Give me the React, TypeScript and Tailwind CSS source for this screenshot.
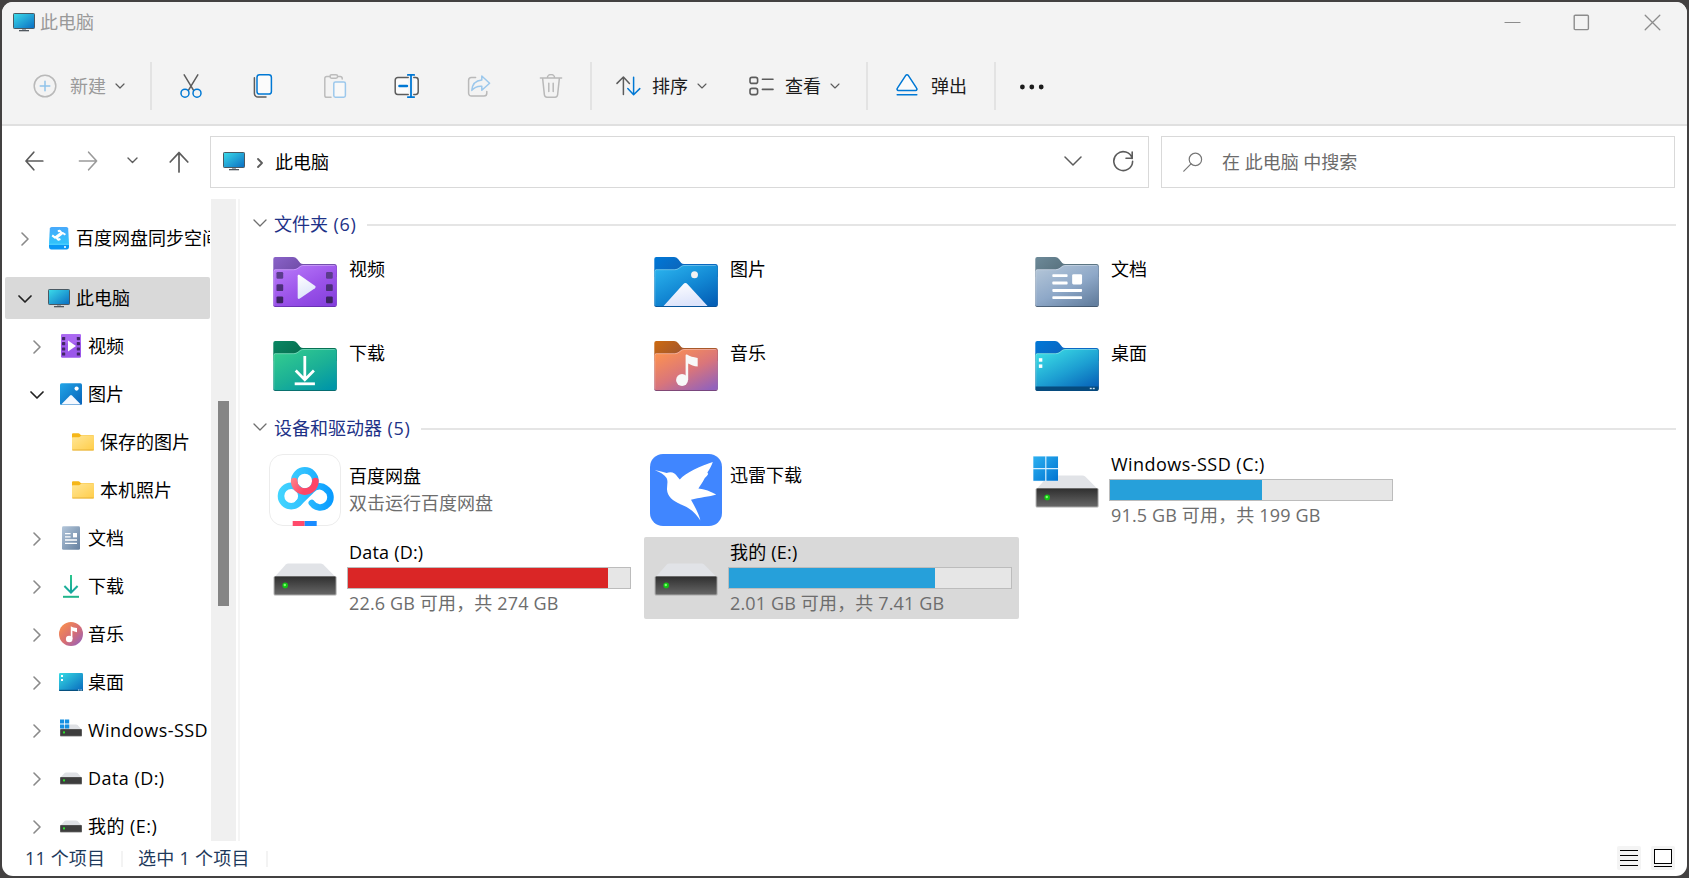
import { ReactNode } from "react";

const INK = "#5c5c5c";
const BLUE = "#0078d4";

/* ---------- small glyphs ---------- */

function Chevron({ dir = "down", w = 10, color = INK, sw = 1.4 }: { dir?: "down" | "right"; w?: number; color?: string; sw?: number }) {
  const h = w / 2;
  const down = dir === "down";
  return (
    <svg
      width={down ? w + 2 : h + 4}
      height={down ? h + 4 : w + 2}
      viewBox={down ? `-1 -2 ${w + 2} ${h + 4}` : `-2 -1 ${h + 4} ${w + 2}`}
      fill="none"
      stroke={color}
      strokeWidth={sw}
      strokeLinecap="round"
      strokeLinejoin="round"
      className="shrink-0"
    >
      <path d={down ? `M0 0L${w / 2} ${h}L${w} 0` : `M0 0L${h} ${w / 2}L0 ${w}`} />
    </svg>
  );
}

function Stroke({ w, h, children, color = INK, sw = 1.5 }: { w: number; h: number; children: ReactNode; color?: string; sw?: number }) {
  return (
    <svg width={w} height={h} viewBox={`0 0 ${w} ${h}`} fill="none" stroke={color} strokeWidth={sw} strokeLinecap="round" strokeLinejoin="round" className="shrink-0">
      {children}
    </svg>
  );
}

function Monitor() {
  return (
    <svg width="22" height="19" viewBox="0 0 22 19" className="shrink-0">
      <defs>
        <linearGradient id="mon" x1="0" y1="0" x2="1" y2="1">
          <stop offset="0" stopColor="#3bdcea" />
          <stop offset="1" stopColor="#0a6cc2" />
        </linearGradient>
      </defs>
      <rect x="9" y="15" width="4" height="3" fill="#9aa3ab" />
      <rect x="6" y="17" width="10" height="1.3" fill="#50575e" />
      <rect x="0.5" y="0.5" width="21" height="15" rx="0.8" fill="url(#mon)" stroke="#4a5963" />
    </svg>
  );
}

/* ---------- toolbar glyphs ---------- */

const NewIcon = () => (
  <Stroke w={24} h={24} color="#b9b9b9">
    <circle cx="12" cy="12" r="10.8" />
    <path d="M12 7.2V16.8M7.2 12H16.8" stroke="#90c3ea" />
  </Stroke>
);
const CutIcon = () => (
  <Stroke w={24} h={24}>
    <path d="M5.2 0.8L14.6 16.4M18.8 0.8L9.4 16.4" />
    <circle cx="6" cy="19.2" r="4" stroke={BLUE} />
    <circle cx="18" cy="19.2" r="4" stroke={BLUE} />
  </Stroke>
);
const CopyIcon = () => (
  <Stroke w={24} h={24}>
    <path d="M3.4 3.8V19.4A3.6 3.6 0 0 0 7 23H15" />
    <rect x="6" y="0.8" width="14.4" height="19.2" rx="2.6" stroke={BLUE} fill="#fbfbfb" />
  </Stroke>
);
const PasteIcon = () => (
  <Stroke w={24} h={24} color="#bcbcbc">
    <path d="M7 2.6H3.6A1.8 1.8 0 0 0 1.8 4.4V21.4A1.8 1.8 0 0 0 3.6 23.2H8M15 2.6H17.4A1.8 1.8 0 0 1 19.2 4.4V5" />
    <rect x="7" y="0.8" width="7.6" height="3.4" rx="1.6" />
    <rect x="10.8" y="8" width="11.6" height="15.2" rx="1.6" stroke="#9cc8ec" fill="#f8f8f8" />
  </Stroke>
);
const RenameIcon = () => (
  <Stroke w={26} h={24}>
    <path d="M14.2 3.6H3.8A2.6 2.6 0 0 0 1.2 6.2V17.8A2.6 2.6 0 0 0 3.8 20.4H14.2M19.8 3.6H21.6A2.6 2.6 0 0 1 24.2 6.2V17.8A2.6 2.6 0 0 1 21.6 20.4H19.8" fill="#fbfbfb" />
    <path d="M17 1V23M13.8 0.9H20.2M13.8 23.1H20.2" stroke={BLUE} strokeWidth="1.8" />
    <path d="M5.4 12H13" stroke={BLUE} strokeWidth="2.4" />
  </Stroke>
);
const ShareIcon = () => (
  <Stroke w={24} h={24} color="#b9b9b9">
    <path d="M8.6 3.6H4.4A2.8 2.8 0 0 0 1.6 6.4V19.2A2.8 2.8 0 0 0 4.4 22H17A2.8 2.8 0 0 0 19.8 19.2V17.6" />
    <path d="M14.8 2L22.6 9.2L14.8 16.2V12.2C10 11.8 7 13.6 4.8 16.4C5.2 10.4 8.6 6.6 14.8 6Z" stroke="#9cc8ec" />
  </Stroke>
);
const TrashIcon = () => (
  <Stroke w={24} h={24} color="#b9b9b9">
    <path d="M1.4 4H22.6M8.4 3.8A3.6 3.2 0 0 1 15.6 3.8M3.6 4.2L5.4 20.8A2.6 2.6 0 0 0 8 23.2H16A2.6 2.6 0 0 0 18.6 20.8L20.4 4.2M9.8 9.2V17.6M14.2 9.2V17.6" />
  </Stroke>
);
const SortIcon = () => (
  <Stroke w={25} h={20}>
    <path d="M7.4 18.6V1.2M1 7.4L7.4 1L13.4 7.4" />
    <path d="M17.6 1.2V18.6M11.8 12.6L17.6 18.8L23.8 12.6" stroke={BLUE} />
  </Stroke>
);
const ViewIcon = () => (
  <Stroke w={25} h={20} sw={1.6}>
    <rect x="1" y="1.4" width="7.6" height="6" rx="2" />
    <rect x="1" y="12.4" width="7.6" height="6.2" rx="2" />
    <path d="M13.4 3.2H24M13.4 13.4H24" />
  </Stroke>
);
const EjectIcon = () => (
  <Stroke w={22} h={22} color={BLUE}>
    <path d="M9.6 1.6L1.4 14.2A1.3 1.3 0 0 0 2.4 16.4H19.6A1.3 1.3 0 0 0 20.6 14.2L12.4 1.6A1.7 1.7 0 0 0 9.6 1.6Z" fill="#fbfbfb" />
    <path d="M1.2 20.8H20.8" />
  </Stroke>
);

/* ---------- folder tiles ---------- */

type Kind = "video" | "picture" | "doc" | "download" | "music" | "desktop";

const folderColors: Record<Kind, { tab: [string, string]; a: string; b: string; c: string; edge: string }> = {
  video: { tab: ["#8a63c9", "#7450ad"], a: "#b97bfa", b: "#9c54ea", c: "#8540dd", edge: "#5f2ca6" },
  picture: { tab: ["#0078d7", "#0a68bf"], a: "#2bb4ee", b: "#1287d3", c: "#045fb6", edge: "#064b8e" },
  doc: { tab: ["#6d8a99", "#5b7582"], a: "#b4c6d8", b: "#8ea8c8", c: "#647f9f", edge: "#3b4d61" },
  download: { tab: ["#0a8763", "#077253"], a: "#34cd8f", b: "#1bb096", c: "#0096a8", edge: "#075f5f" },
  music: { tab: ["#cd6a10", "#a8592a"], a: "#ff944d", b: "#d9757b", c: "#9362bb", edge: "#6c3b6c" },
  desktop: { tab: ["#0078d7", "#0a68c4"], a: "#3de0e6", b: "#1d9fd2", c: "#0762b8", edge: "#053a6d" },
};

function FolderArt({ kind }: { kind: Kind }) {
  switch (kind) {
    case "video":
      return (
        <g>
          {[15, 27.3, 39.4].map((y, i) => (
            <g key={y} fill={["#5b3d8c", "#4c2f7a", "#3c2462"][i]}>
              <rect x="3.2" y={y} width="6.8" height="6.8" rx="1.2" />
              <rect x="53.2" y={y} width="6.8" height="6.8" rx="1.2" />
            </g>
          ))}
          <path d="M24.6 19.2C24.6 17.8 25.6 17.4 26.8 18.2L42 28.8C43 29.5 43 30.5 42 31.2L26.8 41.6C25.6 42.4 24.6 42 24.6 40.6Z" fill="url(#wht)" />
        </g>
      );
    case "picture":
      return (
        <g>
          <circle cx="40.6" cy="17.8" r="3.5" fill="#f2f2f2" />
          <path d="M9.4 49L29.2 27.2Q31.4 24.6 33.6 27.2L53.8 49Z" fill="url(#wht)" />
        </g>
      );
    case "doc":
      return (
        <g fill="#fff">
          <rect x="17.2" y="17.2" width="15.4" height="2.9" rx="0.8" />
          <rect x="17.2" y="24.6" width="15.4" height="2.9" rx="0.8" />
          <rect x="17.2" y="32" width="30" height="2.9" rx="0.8" />
          <rect x="17.2" y="39.2" width="30" height="2.9" rx="0.8" />
          <rect x="37.2" y="17.2" width="10" height="10.3" rx="1.4" />
        </g>
      );
    case "download":
      return (
        <g stroke="#fff" strokeWidth="2.8" fill="none">
          <path d="M31.8 15V38.6M22.6 29.6L31.8 38.8L41 29.6" />
          <path d="M21.6 42.8H42" />
        </g>
      );
    case "music":
      return (
        <g fill="#f8f8f8">
          <circle cx="28" cy="39" r="6" />
          <path d="M31.6 14.4Q31.6 13 33 13.6C36 15.4 39 16.4 43.8 17V25.4C40 25.2 37 24 34.2 22.4V39H31.6Z" />
        </g>
      );
    case "desktop":
      return (
        <g>
          <path d="M0.4 45.6H63.6V48Q63.6 49.8 62 49.8H2Q0.4 49.8 0.4 48Z" fill="#064b7d" />
          <rect x="3.6" y="17.2" width="3.5" height="3.5" fill="#fff" />
          <rect x="3.6" y="23.4" width="3.5" height="3.5" fill="#fff" />
          <rect x="55" y="46.8" width="2" height="1.4" fill="#cfe3f2" />
          <rect x="58" y="46.8" width="2" height="1.4" fill="#cfe3f2" />
        </g>
      );
  }
}

function FolderIcon({ kind }: { kind: Kind }) {
  const c = folderColors[kind];
  return (
    <svg width="64" height="50" viewBox="-0.3 0 64.6 50" preserveAspectRatio="none" className="shrink-0">
      <defs>
        <linearGradient id={`t-${kind}`} x1="0" y1="0" x2="1" y2="0.4">
          <stop offset="0" stopColor={c.tab[0]} />
          <stop offset="0.5" stopColor={c.tab[1]} />
        </linearGradient>
        <linearGradient id={`b-${kind}`} x1="0.1" y1="0" x2="0.85" y2="1">
          <stop offset="0" stopColor={c.a} />
          <stop offset="0.55" stopColor={c.b} />
          <stop offset="1" stopColor={c.c} />
        </linearGradient>
        <linearGradient id="wht" x1="0" y1="0" x2="0.3" y2="1">
          <stop offset="0" stopColor="#fff" />
          <stop offset="1" stopColor="#dde4fb" />
        </linearGradient>
      </defs>
      <path d="M0 20V2Q0 0 2 0H20Q22.4 0 24 2L27.2 6Q28.2 7 30 7H61.8Q64 7 64 9.2V20Z" fill={`url(#t-${kind})`} />
      <path d="M0 14Q0 12.2 2 12.2H20.6Q23 12.2 24.8 10.8L27.4 8.8Q28.6 8 30.4 8H62Q64 8 64 10V48Q64 50 62 50H2Q0 50 0 48Z" fill={c.edge} />
      <path d="M0 14Q0 12.2 2 12.2H20.6Q23 12.2 24.8 10.8L27.4 8.8Q28.6 8 30.4 8H62Q64 8 64 10V47.2Q64 49.2 62 49.2H2Q0 49.2 0 47.2Z" fill={`url(#b-${kind})`} />
      <path d="M0.5 48V14.4Q0.5 12.7 2 12.7H20.8Q23.2 12.7 25 11.2L27.6 9.2Q28.8 8.5 30.4 8.5H62" fill="none" stroke="#fff" strokeOpacity="0.3" />
      <FolderArt kind={kind} />
    </svg>
  );
}

/* ---------- drives and apps ---------- */

function DriveIcon({ windows = false }: { windows?: boolean }) {
  return (
    <svg width="66" height="54" viewBox="0 0 66 54" className="shrink-0">
      <defs>
        <linearGradient id="drv" x1="0" y1="0" x2="0" y2="1">
          <stop offset="0" stopColor="#2f2f2f" />
          <stop offset="1" stopColor="#666" />
        </linearGradient>
        <linearGradient id="win" x1="0" y1="0" x2="1" y2="1">
          <stop offset="0" stopColor="#2cb0f0" />
          <stop offset="1" stopColor="#0073d1" />
        </linearGradient>
      </defs>
      <path d="M14.8 20.4Q15.8 19.4 17.4 19.4H49.4Q51 19.4 52.2 20.6L64.6 33H3.6Z" fill="#e1e3e7" />
      <rect x="2.6" y="32" width="63" height="19.6" rx="1.6" fill="#a9a9a9" />
      <rect x="3.6" y="32.4" width="61" height="18" rx="1" fill="url(#drv)" />
      <circle cx="14.2" cy="41.4" r="2.8" fill="#14c414" />
      <circle cx="13.8" cy="41" r="1.2" fill="#7dff6d" />
      {windows && (
        <g>
          <rect x="0" y="0" width="25.2" height="25.2" fill="#d6efff" />
          <path d="M0.4 0.6H12.2V12H0.4ZM13.4 0.6H25V12H13.4ZM0.4 13.2H12.2V24.8H0.4ZM13.4 13.2H25V24.8H13.4Z" fill="url(#win)" />
        </g>
      )}
    </svg>
  );
}

function BaiduIcon() {
  return (
    <svg width="72" height="72" viewBox="0 0 72 72" className="shrink-0">
      <defs>
        <linearGradient id="bd1" x1="8" y1="0" x2="62" y2="0" gradientUnits="userSpaceOnUse">
          <stop offset="0" stopColor="#44d6ff" />
          <stop offset="0.5" stopColor="#2fc0ff" />
          <stop offset="1" stopColor="#0a9cff" />
        </linearGradient>
        <linearGradient id="bd2" x1="24" y1="24" x2="46" y2="40" gradientUnits="userSpaceOnUse">
          <stop offset="0" stopColor="#ff8088" />
          <stop offset="0.6" stopColor="#ff4566" />
        </linearGradient>
      </defs>
      <rect x="0.5" y="0.5" width="71" height="71" rx="13.5" fill="#fff" stroke="#ececec" />
      <g fill="none" stroke="url(#bd1)" strokeWidth="6.6" strokeLinecap="round">
        <circle cx="35.8" cy="27" r="10.6" />
        <circle cx="22.2" cy="42" r="10.2" />
        <path d="M29.2 49.2L42 36.6C46 32.2 52 30.6 56.6 34.6A10.2 10.2 0 1 1 42.8 49" />
      </g>
      <path d="M25.2 27A10.6 10.6 0 0 0 46.4 27" fill="none" stroke="url(#bd2)" strokeWidth="6.6" strokeLinecap="round" />
      <rect x="23.7" y="67" width="12" height="5" fill="#ff4a6b" />
      <rect x="35.7" y="67" width="12" height="5" fill="#1a8cff" />
    </svg>
  );
}

function XunleiIcon() {
  return (
    <svg width="72" height="72" viewBox="0 0 72 72" className="shrink-0">
      <rect width="72" height="72" rx="13" fill="#4086ff" />
      <path
        d="M4.8 16.2C9 16.6 13.4 18 16.6 19C19 18.2 22 17.8 24.4 19.4C26.6 21 28 23.4 29.8 25.6C35 19 52 11.2 62.8 8C61.4 12 60 14.6 57.4 18.6L58.2 20C56.6 22.6 55 23.4 54 25.4C52.6 28.4 50.2 31.6 48.4 34.4C54.4 35 61 37.4 66.2 40.4C60 42.6 49 43.4 41 45.8C44.4 52 48.4 58.4 50.4 66.4C46.6 60.6 41.4 54.4 31 50.6C22.6 47 17.4 42.4 17 35.6C16.8 31 18.4 27.6 16.6 24C14.6 20.6 10 18 4.8 16.2Z"
        fill="#fff"
      />
    </svg>
  );
}

/* ---------- navigation glyphs ---------- */

function NavIcon({ name }: { name: string }) {
  switch (name) {
    case "baidu":
      return (
        <svg width="22" height="24" viewBox="0 0 22 24" className="shrink-0">
          <defs>
            <linearGradient id="nbd" x1="0" y1="0" x2="0" y2="1">
              <stop offset="0" stopColor="#49a9fb" />
              <stop offset="1" stopColor="#2fc4fb" />
            </linearGradient>
          </defs>
          <path d="M3.6 1H18.4Q20 1 20.2 2.6L21 18H1L1.8 2.6Q2 1 3.6 1Z" fill="url(#nbd)" />
          <path d="M1 17.6H21V20.6Q21 23.6 18.6 23.6H3.4Q1 23.6 1 20.6Z" fill="#0a98f5" />
          <path d="M1 17.4H21V18.8H1Z" fill="#5ee0ff" />
          <circle cx="17" cy="21" r="1" fill="#fff" />
          <path d="M4.2 9.4L7 11.6L12.6 7.2M9.8 5.2L11.6 4.8L14.2 7.4M17.4 8.8L14.8 7L9.4 11.2M12.4 13L10.4 13.8L8 11.4" stroke="#fff" strokeWidth="2" fill="none" strokeLinejoin="round" />
        </svg>
      );
    case "pc":
      return <Monitor />;
    case "video":
      return (
        <svg width="24" height="24" viewBox="0 0 24 24" className="shrink-0">
          <rect x="2" y="0.2" width="20" height="23.6" rx="1.4" fill="#9b57ea" />
          <rect x="2" y="0.2" width="20" height="9" rx="1.4" fill="#ab68f2" />
          {[3, 8, 13.4, 18.4].map((y) => (
            <g key={y} fill="#432768">
              <rect x="3" y={y} width="3.2" height="3.2" rx="0.6" />
              <rect x="17.8" y={y} width="3.2" height="3.2" rx="0.6" />
            </g>
          ))}
          <path d="M9 6.6L17 12L9 17.4Z" fill="#fff" />
        </svg>
      );
    case "picture":
      return (
        <svg width="24" height="24" viewBox="0 0 24 24" className="shrink-0">
          <defs>
            <linearGradient id="npic" x1="0" y1="0" x2="1" y2="1">
              <stop offset="0" stopColor="#22a6e8" />
              <stop offset="1" stopColor="#0761b8" />
            </linearGradient>
          </defs>
          <rect x="1" y="1.2" width="22" height="21.8" rx="1.6" fill="url(#npic)" />
          <circle cx="17.6" cy="6.6" r="2.1" fill="#fff" />
          <path d="M2.2 22.4L11 13.4Q12 12.4 13 13.4L21.8 22.4Z" fill="#f4f8ff" />
        </svg>
      );
    case "folder":
      return (
        <svg width="22" height="18" viewBox="0 0 22 18" className="shrink-0">
          <defs>
            <linearGradient id="nfold" x1="0" y1="0" x2="1" y2="1">
              <stop offset="0" stopColor="#ffe697" />
              <stop offset="1" stopColor="#ffcd49" />
            </linearGradient>
          </defs>
          <path d="M0 6V1.2Q0 0.2 1 0.2H6.4Q7.2 0.2 7.8 1L9 2.2H21Q22 2.2 22 3.2V6Z" fill="#f5b619" />
          <path d="M0 4.8Q0 4.2 0.8 4.2H6.8Q7.6 4.2 8.2 3.6L8.8 3Q9.2 2.6 10 2.6H21.2Q22 2.6 22 3.4V16.4Q22 17.4 21.2 17.4H0.8Q0 17.4 0 16.4Z" fill="url(#nfold)" />
          <path d="M0.4 17H21.6" stroke="#e0a82e" strokeWidth="0.8" />
        </svg>
      );
    case "doc":
      return (
        <svg width="24" height="24" viewBox="0 0 24 24" className="shrink-0">
          <defs>
            <linearGradient id="ndoc" x1="0" y1="0" x2="1" y2="1">
              <stop offset="0" stopColor="#b3c6da" />
              <stop offset="1" stopColor="#65809f" />
            </linearGradient>
          </defs>
          <rect x="3" y="0.2" width="18" height="23.6" rx="1.4" fill="url(#ndoc)" />
          <path d="M6 7.6H11.6M6 10.8H11.6M6 14H18M6 17.4H18" stroke="#fff" strokeWidth="1.3" />
          <rect x="14" y="7" width="4" height="4.4" fill="#fff" />
        </svg>
      );
    case "download":
      return (
        <svg width="24" height="24" viewBox="0 0 24 24" fill="none" strokeWidth="2" className="shrink-0">
          <defs>
            <linearGradient id="ndl" x1="0" y1="0" x2="0" y2="24" gradientUnits="userSpaceOnUse">
              <stop offset="0" stopColor="#2cc98a" />
              <stop offset="1" stopColor="#0d99a5" />
            </linearGradient>
          </defs>
          <path d="M12.01 1V18.6M5.4 12L12 18.6L18.6 12" stroke="url(#ndl)" />
          <path d="M4 22.8H20" stroke="#21b58b" />
        </svg>
      );
    case "music":
      return (
        <svg width="24" height="24" viewBox="0 0 24 24" className="shrink-0">
          <defs>
            <linearGradient id="nmus" x1="0.1" y1="0.1" x2="0.9" y2="0.9">
              <stop offset="0" stopColor="#f78d50" />
              <stop offset="0.55" stopColor="#d66d74" />
              <stop offset="1" stopColor="#9a63b6" />
            </linearGradient>
          </defs>
          <circle cx="12" cy="12" r="12" fill="url(#nmus)" />
          <circle cx="10.2" cy="17" r="3.3" fill="#fff" />
          <path d="M11.8 4.2C13.6 5.2 15.4 5.8 18 6V10.2C16.2 10 14.6 9.4 13.4 8.8V17H11.8Z" fill="#fff" />
        </svg>
      );
    case "desktop":
      return (
        <svg width="24" height="18" viewBox="0 0 24 18" className="shrink-0">
          <defs>
            <linearGradient id="ndesk" x1="0" y1="0" x2="1" y2="1">
              <stop offset="0" stopColor="#36dbe4" />
              <stop offset="1" stopColor="#0868bd" />
            </linearGradient>
          </defs>
          <rect width="24" height="18" rx="1.2" fill="url(#ndesk)" />
          <path d="M0.2 17.4H23.8" stroke="#06507f" strokeWidth="1.2" />
          <path d="M2 2H4V4H2ZM2 6H4V8H2Z" fill="#fff" />
          <path d="M19 17H20.4M21.4 17H22.8" stroke="#d8ecfa" />
        </svg>
      );
    default:
      return (
        <svg width="24" height="22" viewBox="0 0 24 22" className="shrink-0">
          <path d="M5.6 6Q6 5.4 7 5.4H17Q18 5.4 18.6 6L22.6 10.6H1.4Z" fill="#dfe1e5" />
          <rect x="1" y="10.2" width="22" height="7.4" rx="0.8" fill="#8b8b8b" />
          <rect x="1.4" y="10.2" width="21.2" height="6.6" fill="#3d3d3d" />
          <rect x="4" y="12.4" width="2" height="2" fill="#2ce02c" />
          {name === "windrive" && (
            <path d="M1 0.4H5.2V4.6H1ZM6 0.4H10.2V4.6H6ZM1 5.4H5.2V9.6H1ZM6 5.4H10.2V9.6H6Z" fill="#1590e2" />
          )}
        </svg>
      );
  }
}

/* ---------- data ---------- */

type NavItem = { label: string; icon: string; level: 1 | 2 | 3; open?: boolean };

const navRows: NavItem[] = [
  { label: "视频", icon: "video", level: 2 },
  { label: "图片", icon: "picture", level: 2, open: true },
  { label: "保存的图片", icon: "folder", level: 3 },
  { label: "本机照片", icon: "folder", level: 3 },
  { label: "文档", icon: "doc", level: 2 },
  { label: "下载", icon: "download", level: 2 },
  { label: "音乐", icon: "music", level: 2 },
  { label: "桌面", icon: "desktop", level: 2 },
  { label: "Windows-SSD", icon: "windrive", level: 2 },
  { label: "Data (D:)", icon: "drive", level: 2 },
  { label: "我的 (E:)", icon: "drive", level: 2 },
];

const folders: { label: string; kind: Kind }[] = [
  { label: "视频", kind: "video" },
  { label: "图片", kind: "picture" },
  { label: "文档", kind: "doc" },
  { label: "下载", kind: "download" },
  { label: "音乐", kind: "music" },
  { label: "桌面", kind: "desktop" },
];

/* ---------- layout pieces ---------- */

function Separator() {
  return <div className="h-12 w-[2px] shrink-0 bg-[#e3e3e3]" />;
}

function ToolButton({ children }: { children: ReactNode }) {
  return <button className="flex h-12 w-[72px] shrink-0 items-center justify-center">{children}</button>;
}

function NavRow({ label, icon, level, open }: NavItem) {
  const latin = /[A-Z]/.test(label);
  const pad = level === 3 ? "pl-[70px]" : level === 2 ? "pl-[27px]" : "pl-[15px]";
  return (
    <div className={`flex h-12 items-center ${pad}`}>
      {level !== 3 && (
        <div className={`flex w-[20px] shrink-0 justify-center pr-1 ${level === 1 ? "mr-[11px]" : "mr-[10px]"}`}>
          {open ? <Chevron w={12} color="#222" sw={1.7} /> : <Chevron dir="right" w={12} color="#8a8a8a" sw={1.6} />}
        </div>
      )}
      <div className="mt-[-2px] flex w-[28px] shrink-0">
        <NavIcon name={icon} />
      </div>
      <span className={`mt-[-2px] whitespace-nowrap text-[18px] text-black ${level === 2 ? "ml-[1px]" : ""} ${latin ? "tracking-[0.45px]" : ""}`}>{label}</span>
    </div>
  );
}

function GroupHeader({ title, count }: { title: string; count: string }) {
  return (
    <div className="flex h-[26px] items-center">
      <div className="mt-[-2px] w-[22px] pl-[0.5px]">
        <Chevron w={12} color="#6f6f6f" sw={1.3} />
      </div>
      <span className="whitespace-pre text-[18px] text-[#1e3287]">
        {title}
        <span className="tracking-[0.7px]">{` ${count}`}</span>
      </span>
      <div className="ml-[11px] mt-[2px] h-[2px] grow bg-[#e5e5e5]" />
    </div>
  );
}

function Drive({ name, info, percent, low, windows, selected }: { name: string; info: string; percent: number; low?: boolean; windows?: boolean; selected?: boolean }) {
  return (
    <div className={`flex h-[82px] w-[375px] rounded-[2px] ${selected ? "bg-[#d9d9d9]" : ""}`}>
      <div className="flex w-[84px] shrink-0 pl-[8px] pt-[7px]">
        <DriveIcon windows={windows} />
      </div>
      <div className="flex flex-col">
        <span className={`ml-[2px] mt-[3px] h-[24px] text-[18px] leading-[24px] text-black ${windows ? "tracking-[0.46px]" : "tracking-[0.2px]"}`}>{name}</span>
        <div className="mt-[3px] h-[22px] w-[284px] border border-[#bcbcbc] bg-[#e6e6e6]">
          <div className={`h-full ${low ? "bg-[#da2626]" : "bg-[#26a0da]"}`} style={{ width: `${percent}%` }} />
        </div>
        <span className="ml-[2px] mt-[2px] h-[24px] text-[18px] leading-[24px] tracking-[0.15px] text-[#6d6d6d]">{info}</span>
      </div>
    </div>
  );
}

export default function App() {
  return (
    <div className="h-[878px] w-[1689px] overflow-hidden bg-[#434141] p-[2px] font-['Open_Sans','Noto_Sans_CJK_SC',sans-serif] font-normal">
      <div className="flex h-[874px] w-[1685px] flex-col overflow-hidden rounded-[11px] bg-white">
        {/* title bar */}
        <header className="h-[124px] shrink-0 border-b-2 border-[#e0e0e0] bg-[#f3f3f3]">
          <div className="flex h-10 items-center pl-[11px]">
            <Monitor />
            <span className="ml-[5px] text-[18px] text-[#999]">此电脑</span>
            <div className="ml-auto flex items-center pr-[26px]">
              <Stroke w={17} h={17} color="#8c8c8c" sw={1.2}>
                <path d="M1 8.5H16" />
              </Stroke>
              <div className="ml-[52px]">
                <Stroke w={17} h={17} color="#8c8c8c" sw={1.4}>
                  <rect x="1.2" y="1.2" width="14.2" height="14.4" rx="1" />
                </Stroke>
              </div>
              <div className="ml-[54px]">
                <Stroke w={17} h={17} color="#8c8c8c" sw={1.3}>
                  <path d="M1.2 1.2L15.8 15.8M15.8 1.2L1.2 15.8" />
                </Stroke>
              </div>
            </div>
          </div>
          {/* command bar */}
          <div className="mt-5 flex h-12 items-center text-[18px] text-[#1b1b1b]">
            <button className="ml-[31px] flex items-center">
              <NewIcon />
              <span className="ml-[13px] text-[#9a9a9a]">新建</span>
              <span className="ml-[9px]"><Chevron w={8} sw={1.2} /></span>
            </button>
            <div className="ml-[25px]"><Separator /></div>
            <div className="ml-[3px] flex">
              <ToolButton><CutIcon /></ToolButton>
              <ToolButton><CopyIcon /></ToolButton>
              <ToolButton><PasteIcon /></ToolButton>
              <ToolButton><RenameIcon /></ToolButton>
              <ToolButton><ShareIcon /></ToolButton>
              <ToolButton><TrashIcon /></ToolButton>
            </div>
            <div className="ml-[3px]"><Separator /></div>
            <button className="ml-[24px] flex items-center">
              <SortIcon />
              <span className="ml-[11px]">排序</span>
              <span className="ml-[9px]"><Chevron w={8} sw={1.1} /></span>
            </button>
            <button className="ml-[42px] flex items-center">
              <ViewIcon />
              <span className="ml-[11px]">查看</span>
              <span className="ml-[9px]"><Chevron w={8} sw={1.1} /></span>
            </button>
            <div className="ml-[26px]"><Separator /></div>
            <button className="ml-[28px] flex items-center">
              <span className="mt-[-2px]"><EjectIcon /></span>
              <span className="ml-[13px]">弹出</span>
            </button>
            <div className="ml-[27px]"><Separator /></div>
            <button className="ml-[23px] mt-[2px]">
              <svg width="26" height="6" viewBox="0 0 26 6" fill="#1b1b1b">
                <circle cx="3.4" cy="3" r="2.4" />
                <circle cx="12.8" cy="3" r="2.4" />
                <circle cx="22.2" cy="3" r="2.4" />
              </svg>
            </button>
          </div>
        </header>

        {/* address row */}
        <div className="flex h-[73px] shrink-0 items-start pt-[10px]">
          <div className="flex h-[50px] w-[208px] shrink-0 items-center">
            <div className="ml-[22px]">
              <Stroke w={20} h={20} sw={1.7}><path d="M18.8 10H2M9.8 1.2L2 10L9.8 18.8" /></Stroke>
            </div>
            <div className="ml-[34px]">
              <Stroke w={20} h={20} sw={1.6} color="#9a9a9a"><path d="M1.4 10H18.6M10.6 1.2L18.6 10L10.6 18.8" /></Stroke>
            </div>
            <div className="ml-[29px] mt-[-1px]"><Chevron w={9} /></div>
            <div className="ml-[31px] mt-[2px]">
              <Stroke w={20} h={22} sw={1.7}><path d="M10 21V1.6M1.2 11L10 1.6L18.8 11" /></Stroke>
            </div>
          </div>
          <div className="flex h-[52px] w-[939px] shrink-0 items-center border border-[#d9d9d9] pl-[12px]">
            <div className="mt-[-2px]"><Monitor /></div>
            <span className="ml-[11px] mt-[2px]"><Chevron dir="right" w={8} sw={1.8} /></span>
            <span className="ml-[11px] text-[18px] text-black">此电脑</span>
            <div className="ml-auto mt-[-2px]"><Chevron w={16} sw={1.5} /></div>
            <div className="ml-[30px] mr-[14px] mt-[-2px]">
              <Stroke w={22} h={22} sw={1.6}>
                <path d="M20.2 8.4A9.4 9.4 0 1 0 20.6 11.4M20.2 2V8.2H14" />
              </Stroke>
            </div>
          </div>
          <div className="ml-[12px] flex h-[52px] w-[514px] items-center border border-[#d9d9d9] pl-[21px]">
            <Stroke w={20} h={20} color="#777" sw={1.2}>
              <circle cx="12.4" cy="7.4" r="6.2" />
              <path d="M8 11.8L0.8 19.2" />
            </Stroke>
            <span className="ml-[19px] text-[18px] text-[#6b6b6b]">在 此电脑 中搜索</span>
          </div>
        </div>

        {/* body */}
        <div className="flex h-[642px] shrink-0">
          <nav className="h-[642px] w-[208px] shrink-0 overflow-hidden pt-4">
            <NavRow label="百度网盘同步空间" icon="baidu" level={1} />
            <div className="ml-[3px] mt-[14px] flex h-[42px] items-center rounded-[2px] bg-[#d9d9d9]">
              <div className="-ml-[3px] mt-[2px]">
                <NavRow label="此电脑" icon="pc" level={1} open />
              </div>
            </div>
            <div className="mt-1">
              {navRows.map((r) => (
                <NavRow key={r.label} {...r} />
              ))}
            </div>
          </nav>
          <div className="ml-[1px] h-full w-[25px] shrink-0 bg-[#f0f0f0] pl-[7px] pt-[202px]">
            <div className="h-[205px] w-[11px] bg-[#858585]" />
          </div>
          <div className="ml-[2px] h-full w-[2px] shrink-0 bg-[#f5f5f5]" />

          <main className="flex-1 pl-[12px] pr-[11px] pt-[12px]">
            <GroupHeader title="文件夹" count="(6)" />
            <div className="ml-[11px] mt-[12px] grid w-[1137px] grid-cols-[375px_375px_375px] gap-x-[6px] gap-y-[2px]">
              {folders.map((f) => (
                <div key={f.kind} className="flex h-[82px]">
                  <div className="w-[86px] shrink-0 pl-[10px] pt-[8px]">
                    <FolderIcon kind={f.kind} />
                  </div>
                  <span className="mt-[8px] h-[24px] text-[18px] leading-[24px] text-black">{f.label}</span>
                </div>
              ))}
            </div>
            <GroupHeader title="设备和驱动器" count="(5)" />
            <div className="ml-[11px] mt-[8px] grid w-[1137px] grid-cols-[375px_375px_375px] gap-x-[6px] gap-y-[6px]">
              <div className="flex h-[82px]">
                <div className="w-[86px] shrink-0 pl-[6px] pt-[5px]"><BaiduIcon /></div>
                <div className="flex flex-col pt-[15px] text-[18px] leading-[24px]">
                  <span className="text-black">百度网盘</span>
                  <span className="mt-[3px] text-[#6d6d6d]">双击运行百度网盘</span>
                </div>
              </div>
              <div className="flex h-[82px]">
                <div className="w-[86px] shrink-0 pl-[6px] pt-[5px]"><XunleiIcon /></div>
                <span className="mt-[14px] h-[24px] text-[18px] leading-[24px] text-black">迅雷下载</span>
              </div>
              <Drive name="Windows-SSD (C:)" info="91.5 GB 可用，共 199 GB" percent={54} windows />
              <Drive name="Data (D:)" info="22.6 GB 可用，共 274 GB" percent={92.2} low />
              <Drive name="我的 (E:)" info="2.01 GB 可用，共 7.41 GB" percent={73} selected />
            </div>
          </main>
        </div>

        {/* status bar */}
        <footer className="flex h-[35px] shrink-0 items-center pl-[23px] pr-[12px] text-[18px] text-[#1e395b]">
          <span className="w-[96px] tracking-[0.15px]">11 个项目</span>
          <div className="h-4 w-[2px] bg-[#f3f3f3]" />
          <span className="ml-[15px] w-[128px] whitespace-nowrap tracking-[0.25px]">选中 1 个项目</span>
          <div className="h-4 w-[2px] bg-[#f3f3f3]" />
          <div className="ml-auto mt-[-2px] flex gap-[10px]">
            <div className="flex h-6 w-6 items-center justify-center rounded-[2px] bg-[#f4f4f4]">
              <svg width="18" height="18" viewBox="0 0 18 18" fill="#000">
                <path d="M0 1H18V2H0ZM0 6H18V7H0ZM0 11H18V12H0ZM0 16H18V17H0Z" />
              </svg>
            </div>
            <div className="flex h-6 w-6 items-center justify-center rounded-[2px] bg-[#f4f4f4]">
              <svg width="18" height="18" viewBox="0 0 18 18">
                <rect x="0.5" y="0.5" width="17" height="14" fill="#fff" stroke="#000" />
                <path d="M0 17H18V18H0Z" fill="#000" />
              </svg>
            </div>
          </div>
        </footer>
      </div>
    </div>
  );
}
